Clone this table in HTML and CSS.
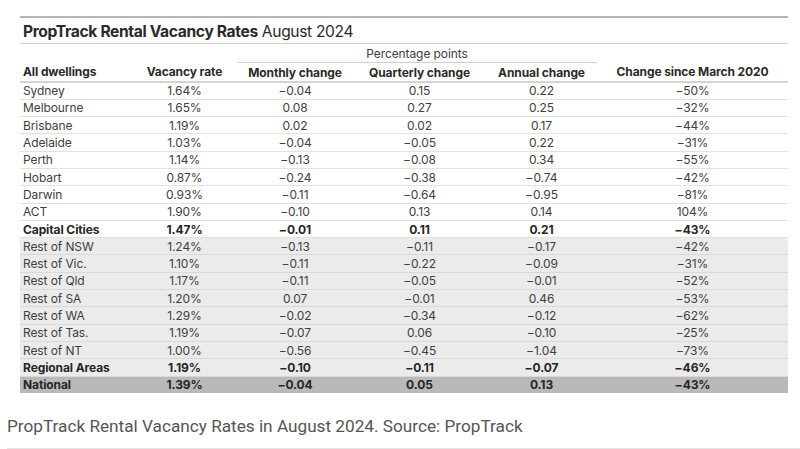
FILE: index.html
```html
<!DOCTYPE html>
<html lang="en">
<head>
<meta charset="utf-8">
<title>PropTrack Rental Vacancy Rates</title>
<link rel="stylesheet" href="styles.css">
</head>
<body>
<figure class="figure">
  <div class="chart">
    <table class="rates">
      <colgroup>
        <col class="c1"><col class="c2"><col class="c3"><col class="c4"><col class="c5"><col class="c6">
      </colgroup>
      <thead>
        <tr class="title-row">
          <th colspan="6" class="title"><b>PropTrack Rental Vacancy Rates</b> August 2024</th>
        </tr>
        <tr class="group-row">
          <th></th><th></th>
          <th colspan="3" class="group">Percentage points</th>
          <th></th>
        </tr>
        <tr class="head-row">
          <th class="name">All dwellings</th>
          <th>Vacancy rate</th>
          <th>Monthly change</th>
          <th>Quarterly change</th>
          <th>Annual change</th>
          <th>Change since March 2020</th>
        </tr>
      </thead>
      <tbody>
        <tr><td class="name">Sydney</td><td>1.64%</td><td>−0.04</td><td>0.15</td><td>0.22</td><td>−50%</td></tr>
        <tr><td class="name">Melbourne</td><td>1.65%</td><td>0.08</td><td>0.27</td><td>0.25</td><td>−32%</td></tr>
        <tr><td class="name">Brisbane</td><td>1.19%</td><td>0.02</td><td>0.02</td><td>0.17</td><td>−44%</td></tr>
        <tr><td class="name">Adelaide</td><td>1.03%</td><td>−0.04</td><td>−0.05</td><td>0.22</td><td>−31%</td></tr>
        <tr><td class="name">Perth</td><td>1.14%</td><td>−0.13</td><td>−0.08</td><td>0.34</td><td>−55%</td></tr>
        <tr><td class="name">Hobart</td><td>0.87%</td><td>−0.24</td><td>−0.38</td><td>−0.74</td><td>−42%</td></tr>
        <tr><td class="name">Darwin</td><td>0.93%</td><td>−0.11</td><td>−0.64</td><td>−0.95</td><td>−81%</td></tr>
        <tr><td class="name">ACT</td><td>1.90%</td><td>−0.10</td><td>0.13</td><td>0.14</td><td>104%</td></tr>
        <tr class="total"><td class="name">Capital Cities</td><td>1.47%</td><td>−0.01</td><td>0.11</td><td>0.21</td><td>−43%</td></tr>
        <tr class="shade"><td class="name">Rest of NSW</td><td>1.24%</td><td>−0.13</td><td>−0.11</td><td>−0.17</td><td>−42%</td></tr>
        <tr class="shade"><td class="name">Rest of Vic.</td><td>1.10%</td><td>−0.11</td><td>−0.22</td><td>−0.09</td><td>−31%</td></tr>
        <tr class="shade"><td class="name">Rest of Qld</td><td>1.17%</td><td>−0.11</td><td>−0.05</td><td>−0.01</td><td>−52%</td></tr>
        <tr class="shade"><td class="name">Rest of SA</td><td>1.20%</td><td>0.07</td><td>−0.01</td><td>0.46</td><td>−53%</td></tr>
        <tr class="shade"><td class="name">Rest of WA</td><td>1.29%</td><td>−0.02</td><td>−0.34</td><td>−0.12</td><td>−62%</td></tr>
        <tr class="shade"><td class="name">Rest of Tas.</td><td>1.19%</td><td>−0.07</td><td>0.06</td><td>−0.10</td><td>−25%</td></tr>
        <tr class="shade"><td class="name">Rest of NT</td><td>1.00%</td><td>−0.56</td><td>−0.45</td><td>−1.04</td><td>−73%</td></tr>
        <tr class="shade total"><td class="name">Regional Areas</td><td>1.19%</td><td>−0.10</td><td>−0.11</td><td>−0.07</td><td>−46%</td></tr>
        <tr class="national total"><td class="name">National</td><td>1.39%</td><td>−0.04</td><td>0.05</td><td>0.13</td><td>−43%</td></tr>
      </tbody>
    </table>
  </div>
  <figcaption class="caption">PropTrack Rental Vacancy Rates in August 2024. Source: PropTrack</figcaption>
</figure>
</body>
</html>
```
FILE: styles.css
```css
html, body {
  margin: 0;
  padding: 0;
  background: #ffffff;
}

.figure {
  margin: 0;
  padding: 0 0 0 7px;
  width: 793px;
}

.chart {
  padding: 16px 0 0 13px;
}

.rates {
  width: 768px;
  border-collapse: collapse;
  table-layout: fixed;
  font-family: "Inter", "Liberation Sans", sans-serif;
  font-size: 12px;
  color: #404040;
  letter-spacing: -0.1px;
}

.c1 { width: 112px; }
.c2 { width: 105px; }
.c3 { width: 116px; }
.c4 { width: 133px; }
.c5 { width: 111px; }
.c6 { width: 191px; }

.rates th,
.rates td {
  padding: 0;
  text-align: center;
  white-space: nowrap;
}

.title-row th {
  border-top: 2px solid #b4b4b4;
  border-bottom: 1px solid #cfcfcf;
  height: 23px;
  text-align: left;
  padding: 2px 0 0 3px;
  font-size: 15.6px;
  font-weight: 400;
  color: #2a2a2a;
  letter-spacing: -0.35px;
}

.title-row b {
  font-weight: 700;
}

.group-row th {
  height: 18px;
  font-weight: 400;
  color: #3d3d3d;
}

.group-row .group {
  border-bottom: 1px solid #cfcfcf;
}

.head-row th {
  height: 18px;
  font-weight: 700;
  color: #2a2a2a;
  border-bottom: 2px solid #d4d4d4;
}

.rates .name {
  text-align: left;
  padding-left: 3px;
}

.rates tbody tr {
  height: 17.3px;
}

.rates tbody td {
  border-bottom: 1px solid #e2e2e2;
}

.rates tr.total td {
  font-weight: 700;
  color: #262626;
}

.rates tr.shade td {
  background: #ebebeb;
  border-bottom-color: #d9d9d9;
}

.rates tr.national td {
  background: #b9b9b9;
  border-bottom: none;
}

.caption {
  margin: 23px 0 0 0;
  padding-bottom: 12px;
  border-bottom: 2px solid #e6e6e6;
  font-family: "Roboto", "Liberation Sans", sans-serif;
  font-size: 17.2px;
  color: #555555;
}
```
